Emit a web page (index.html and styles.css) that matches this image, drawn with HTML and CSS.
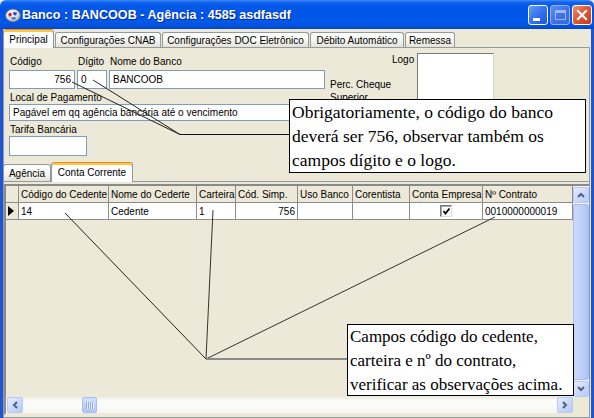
FILE: index.html
```html
<!DOCTYPE html>
<html>
<head>
<meta charset="utf-8">
<link rel="stylesheet" href="styles.css">
</head>
<body>
<div class="screen">
  <div class="window">
    <div class="titlebar">
      <svg class="appicon" width="16" height="16" viewBox="0 0 16 16">
        <defs>
          <radialGradient id="gl" cx="40%" cy="35%" r="70%">
            <stop offset="0" stop-color="#ffffff"/>
            <stop offset="0.6" stop-color="#d9dce6"/>
            <stop offset="1" stop-color="#8a92a8"/>
          </radialGradient>
        </defs>
        <ellipse cx="8" cy="8.5" rx="7.5" ry="6.5" fill="url(#gl)" stroke="#5a6380" stroke-width="0.8"/>
        <path d="M3 7 L6 5.5 L7 8 L4.5 10 Z" fill="#c8202a"/>
        <path d="M8 5 L12 5.5 L11 8.5 L8.5 8 Z" fill="#2a4fb8"/>
        <path d="M6 10.5 L10 10 L11 12 L7 12.5 Z" fill="#3d6fd8"/>
      </svg>
      <span class="title">Banco : BANCOOB - Agência : 4585 asdfasdf</span>
      <div class="tbtns">
        <span class="tb tb-min"><span class="minbar"></span></span>
        <span class="tb tb-max"><span class="maxbox"></span></span>
        <span class="tb tb-close">
          <svg width="18" height="18" viewBox="0 0 18 18"><path d="M5 5 L13 13 M13 5 L5 13" stroke="#fff" stroke-width="2.2" stroke-linecap="square"/></svg>
        </span>
      </div>
    </div>

    <div class="body">
      <div class="tabs maintabs">
        <div class="tab sel t-principal">Principal</div>
        <div class="tab t-cnab">Configurações CNAB</div>
        <div class="tab t-doc">Configurações DOC Eletrônico</div>
        <div class="tab t-deb">Débito Automático</div>
        <div class="tab t-rem">Remessa</div>
      </div>

      <div class="panel">
        <div class="form">
          <div class="leftcol">
            <div class="row1">
              <div class="field f-cod">
                <div class="lbl lbl-top">Código</div>
                <div class="input in-cod">756</div>
              </div>
              <div class="field f-dig">
                <div class="lbl lbl-top">Dígito</div>
                <div class="input in-top">0</div>
              </div>
              <div class="field f-nome">
                <div class="lbl lbl-top">Nome do Banco</div>
                <div class="input in-top">BANCOOB</div>
              </div>
            </div>
            <div class="field f-local">
              <div class="lbl">Local de Pagamento</div>
              <div class="input in-local">Pagável em qq agência bancária até o vencimento</div>
            </div>
            <div class="field f-tarifa">
              <div class="lbl">Tarifa Bancária</div>
              <div class="input in-tarifa"></div>
            </div>
          </div>
          <div class="perc">Perc. Cheque<br>Superior</div>
          <div class="logo">
            <div class="lbl">Logo</div>
            <div class="logobox"></div>
          </div>
        </div>

        <div class="tabs innertabs">
          <div class="tab t-ag">Agência</div>
          <div class="tab sel t-cc">Conta Corrente</div>
        </div>

        <div class="sheet">
          <div class="grid">
            <div class="gmain">
              <div class="grow ghead">
                <div class="gc w-ind"></div>
                <div class="gc w-c1">Código do Cedente</div>
                <div class="gc w-c2">Nome do Cederte</div>
                <div class="gc w-c3">Carteira</div>
                <div class="gc w-c4">Cód. Simp.</div>
                <div class="gc w-c5">Uso Banco</div>
                <div class="gc w-c6">Corentista</div>
                <div class="gc w-c7">Conta Empresa</div>
                <div class="gc w-c8">Nº Contrato</div>
              </div>
              <div class="grow gdata">
                <div class="gc w-ind ind">
                  <svg width="7" height="10" viewBox="0 0 7 10"><path d="M0 0 L6 5 L0 10 Z" fill="#000"/></svg>
                </div>
                <div class="gc w-c1">14</div>
                <div class="gc w-c2">Cedente</div>
                <div class="gc w-c3">1</div>
                <div class="gc w-c4 num">756</div>
                <div class="gc w-c5"></div>
                <div class="gc w-c6"></div>
                <div class="gc w-c7 center">
                  <span class="chk">
                    <svg width="9" height="9" viewBox="0 0 9 9"><path d="M1.5 4 L3.5 6.5 L7.5 1.5" stroke="#000" stroke-width="1.8" fill="none"/></svg>
                  </span>
                </div>
                <div class="gc w-c8">0010000000019</div>
              </div>
            </div>
            <div class="vscroll">
              <span class="sbtn">
                <svg width="8" height="6" viewBox="0 0 8 6"><path d="M1 5 L4 2 L7 5" stroke="#4D6185" stroke-width="2" fill="none"/></svg>
              </span>
              <span class="vthumb"></span>
              <span class="sbtn">
                <svg width="8" height="6" viewBox="0 0 8 6"><path d="M1 1 L4 4 L7 1" stroke="#4D6185" stroke-width="2" fill="none"/></svg>
              </span>
            </div>
            <div class="hscroll">
              <span class="sbtn">
                <svg width="6" height="8" viewBox="0 0 6 8"><path d="M5 1 L2 4 L5 7" stroke="#4D6185" stroke-width="2" fill="none"/></svg>
              </span>
              <span class="hthumb"><span class="grip"></span></span>
              <span class="hspace"></span>
              <span class="sbtn">
                <svg width="6" height="8" viewBox="0 0 6 8"><path d="M1 1 L4 4 L1 7" stroke="#4D6185" stroke-width="2" fill="none"/></svg>
              </span>
            </div>
            <div class="corner"></div>
          </div>
        </div>
      </div>
    </div>
  </div>

  <svg class="leaders" width="594" height="418" viewBox="0 0 594 418">
    <line x1="72" y1="82" x2="180" y2="134.5" stroke="#222" stroke-width="1"/>
    <line x1="93" y1="80" x2="180" y2="134.5" stroke="#222" stroke-width="1"/>
    <line x1="180" y1="134.5" x2="290" y2="134.5" stroke="#111" stroke-width="1.2"/>
    <line x1="65" y1="213" x2="206" y2="359" stroke="#222" stroke-width="1"/>
    <line x1="213" y1="210" x2="206" y2="359" stroke="#333" stroke-width="1"/>
    <line x1="495" y1="217" x2="206" y2="359" stroke="#333" stroke-width="1"/>
    <line x1="206" y1="359" x2="348" y2="359" stroke="#8a8a86" stroke-width="2"/>
  </svg>

  <div class="callout c1">Obrigatoriamente, o código do banco<br>deverá ser 756, observar também os<br>campos dígito e o logo.</div>
  <div class="callout c2">Campos código do cedente,<br>carteira e nº do contrato,<br>verificar as observações acima.</div>
</div>
</body>
</html>
```

FILE: styles.css
```css
* { box-sizing: border-box; }
html, body { margin: 0; padding: 0; }
body {
  width: 594px;
  height: 418px;
  overflow: hidden;
  font-family: "Liberation Sans", Arial, sans-serif;
  font-size: 10px;
  color: #000;
  background: #ECE9D8;
}
.screen { position: relative; width: 594px; height: 418px; overflow: hidden; }
.window { display: flex; flex-direction: column; width: 594px; height: 418px; }

/* title bar */
.titlebar {
  flex: 0 0 29px;
  display: flex;
  align-items: center;
  padding: 0 2px 0 5px;
  background: linear-gradient(to bottom, #3F8CF9 0px, #1566EE 2px, #0458E8 6px, #0055E6 14px, #0258E9 22px, #0450D8 27px, #0342C4 29px);
  border-radius: 6px 6px 0 0;
}
.appicon { flex: 0 0 16px; margin-right: 1px; }
.title {
  flex: 1;
  color: #fff;
  font-weight: bold;
  font-size: 12.6px;
  text-shadow: 1px 1px 0 #0B2A96;
  white-space: nowrap;
}
.tbtns { display: flex; gap: 2px; }
.tb {
  position: relative;
  width: 20px;
  height: 20px;
  border: 1px solid #fff;
  border-radius: 3px;
  display: flex;
  align-items: center;
  justify-content: center;
}
.tb-min { background: linear-gradient(135deg, #6E9CF7 0%, #3C78F0 40%, #1E56DA 100%); }
.minbar { position: absolute; left: 4px; top: 12px; width: 7px; height: 3px; background: #fff; }
.tb-max {
  background: linear-gradient(135deg, #5F8EF0 0%, #3E72E6 50%, #3566DD 100%);
  border-color: #8FB1F5;
}
.maxbox {
  width: 11px; height: 10px;
  border: 1px solid #9DB8F3;
  border-top-width: 3px;
}
.tb-close { background: linear-gradient(135deg, #F0906E 0%, #DD5A36 45%, #C63C17 100%); }

/* body frame */
.body {
  flex: 1;
  min-height: 0;
  display: flex;
  flex-direction: column;
  border-left: 3px solid #1E55D6;
  border-right: 3px solid #1E55D6;
  background: #ECE9D8;
}

/* tabs */
.tabs { display: flex; align-items: flex-end; position: relative; z-index: 1; }
.tab {
  height: 15px;
  border: 1px solid #919B9C;
  border-bottom: none;
  border-radius: 3px 3px 0 0;
  background: linear-gradient(to bottom, #FFFFFF 0%, #F7F7F4 50%, #E4E1D8 100%);
  display: flex;
  align-items: center;
  justify-content: center;
  white-space: nowrap;
  margin-right: 1px;
}
.tab.sel {
  background: #FCFCFE;
  border-top: 1px solid #E68B2C;
  box-shadow: inset 0 2px 0 #FFC83C;
  margin-bottom: -1px;
}
.maintabs { height: 18px; }
.maintabs .tab.sel { height: 19px; }
.t-principal { width: 51px; }
.t-cnab { width: 106px; }
.t-doc { width: 147px; }
.t-deb { width: 94px; }
.t-rem { width: 50px; }

/* panel */
.panel {
  flex: 1;
  min-height: 0;
  margin-right: 1px;
  border: 1px solid #919B9C;
  background: #ECE9D8;
  display: flex;
  flex-direction: column;
}
.form { flex: 0 0 113px; display: flex; padding-left: 5px; }
.leftcol { width: 316px; margin-top: 7px; display: flex; flex-direction: column; }
.row1 { display: flex; gap: 2px; }
.lbl { height: 13px; line-height: 13px; padding-left: 1px; white-space: nowrap; }
.lbl-top { height: 15px; }
.input {
  background: #fff;
  border: 1px solid #7F9DB9;
  display: flex;
  align-items: center;
  padding: 0 3px;
  white-space: nowrap;
  overflow: hidden;
}
.f-cod { width: 66px; }
.f-dig { width: 30px; }
.f-nome { width: 216px; }
.in-top, .in-cod { height: 19px; }
.in-cod { justify-content: flex-end; padding-right: 3px; }
.f-local { margin-top: 2px; }
.in-local { height: 17px; width: 316px; }
.f-tarifa { margin-top: 2px; }
.in-tarifa { height: 20px; width: 78px; }

.perc { margin-left: 5px; margin-top: 30px; width: 62px; line-height: 13px; }
.logo { display: flex; gap: 3px; margin-top: 5px; }
.logo .lbl { padding-left: 0; }
.logobox {
  width: 77px;
  height: 73px;
  background: #fff;
  border: 1px solid;
  border-color: #7A7A7A #D8D4C8 #D8D4C8 #7A7A7A;
}

/* inner tabs */
.innertabs { height: 20px; margin-left: -1px; }
.innertabs .tab { height: 17px; }
.innertabs .tab.sel { height: 20px; }
.t-ag { width: 48px; margin-right: 0; }
.t-cc { width: 82px; }

.sheet {
  flex: 1;
  min-height: 0;
  border-top: 1px solid #919B9C;
  padding-top: 2px;
}

/* grid */
.grid {
  width: 585px;
  height: 231px;
  border-top: 2px solid #8A8A8A;
  border-left: 2px solid #8A8A8A;
  border-bottom: 2px solid #ECE9D8;
  display: grid;
  grid-template-columns: 567px 16px;
  grid-template-rows: 211px 16px;
  background: #ECE9D8;
}
.gmain { background: #ECE9D8; overflow: hidden; }
.grow { display: flex; }
.gc {
  flex: 0 0 auto;
  height: 17px;
  border-right: 1px solid #8C8C8C;
  border-bottom: 1px solid #8C8C8C;
  padding: 0 2px;
  display: flex;
  align-items: center;
  white-space: nowrap;
  overflow: hidden;
}
.ghead .gc { background: #ECE9D8; }
.gdata .gc { background: #fff; }
.gdata .gc.ind { background: #ECE9D8; padding-left: 2px; }
.gc.num { justify-content: flex-end; }
.gc.center { justify-content: center; }
.w-ind { width: 13px; }
.w-c1 { width: 90px; }
.w-c2 { width: 88px; }
.w-c3 { width: 39px; }
.w-c4 { width: 62px; }
.w-c5 { width: 55px; }
.w-c6 { width: 57px; }
.w-c7 { width: 73px; }
.w-c8 { width: 90px; }

.chk {
  width: 12px;
  height: 12px;
  background: #fff;
  border: 1px solid;
  border-color: #7A7A7A #E0DED6 #E0DED6 #7A7A7A;
  box-shadow: inset 1px 1px 0 #A8A8A8;
  display: flex;
  align-items: center;
  justify-content: center;
}

/* scrollbars */
.vscroll {
  display: flex;
  flex-direction: column;
  background: #F4F3EE;
}
.sbtn {
  flex: 0 0 16px;
  width: 16px;
  height: 16px;
  border: 1px solid #B7C9F4;
  border-radius: 2px;
  background: linear-gradient(135deg, #E4ECFE 0%, #CCDAFC 50%, #B5C9F8 100%);
  display: flex;
  align-items: center;
  justify-content: center;
}
.vscroll .sbtn:first-child { margin-top: 1px; }
.vthumb {
  flex: 1;
  margin: 1px 0;
  border: 1px solid #A9BEF0;
  border-radius: 2px;
  background: linear-gradient(to right, #CAD8FC 0%, #C0D1FB 50%, #ADC3F6 100%);
}
.hscroll {
  display: flex;
  align-items: center;
  padding-left: 1px;
  background: linear-gradient(to bottom, #EDECE4 0%, #FCFCFA 25%, #F7F6F1 100%);
}
.hthumb {
  width: 15px;
  height: 16px;
  margin-left: 59px;
  border: 1px solid #A9BEF0;
  border-radius: 2px;
  background: linear-gradient(to bottom, #D4E0FD 0%, #BFD0FB 60%, #B0C5F7 100%);
  display: flex;
  align-items: center;
  justify-content: center;
}
.grip {
  width: 8px;
  height: 7px;
  background: repeating-linear-gradient(to right, #8CA8E8 0, #8CA8E8 1px, #EEF3FF 1px, #EEF3FF 2px);
}
.hspace { flex: 1; }
.corner { background: #ECE9D8; }

/* overlays */
.leaders { position: absolute; left: 0; top: 0; pointer-events: none; }
.callout {
  position: absolute;
  background: #fff;
  border: 1px solid #000;
  font-family: "Liberation Serif", "Times New Roman", serif;
  font-size: 17px;
  line-height: 24px;
  padding: 0 2px;
  color: #000;
  white-space: nowrap;
  overflow: hidden;
}
.c1 { left: 289px; top: 99px; width: 297px; height: 74px; font-size: 17.5px; }
.c2 { left: 347px; top: 324px; width: 227px; height: 72px; }
```
